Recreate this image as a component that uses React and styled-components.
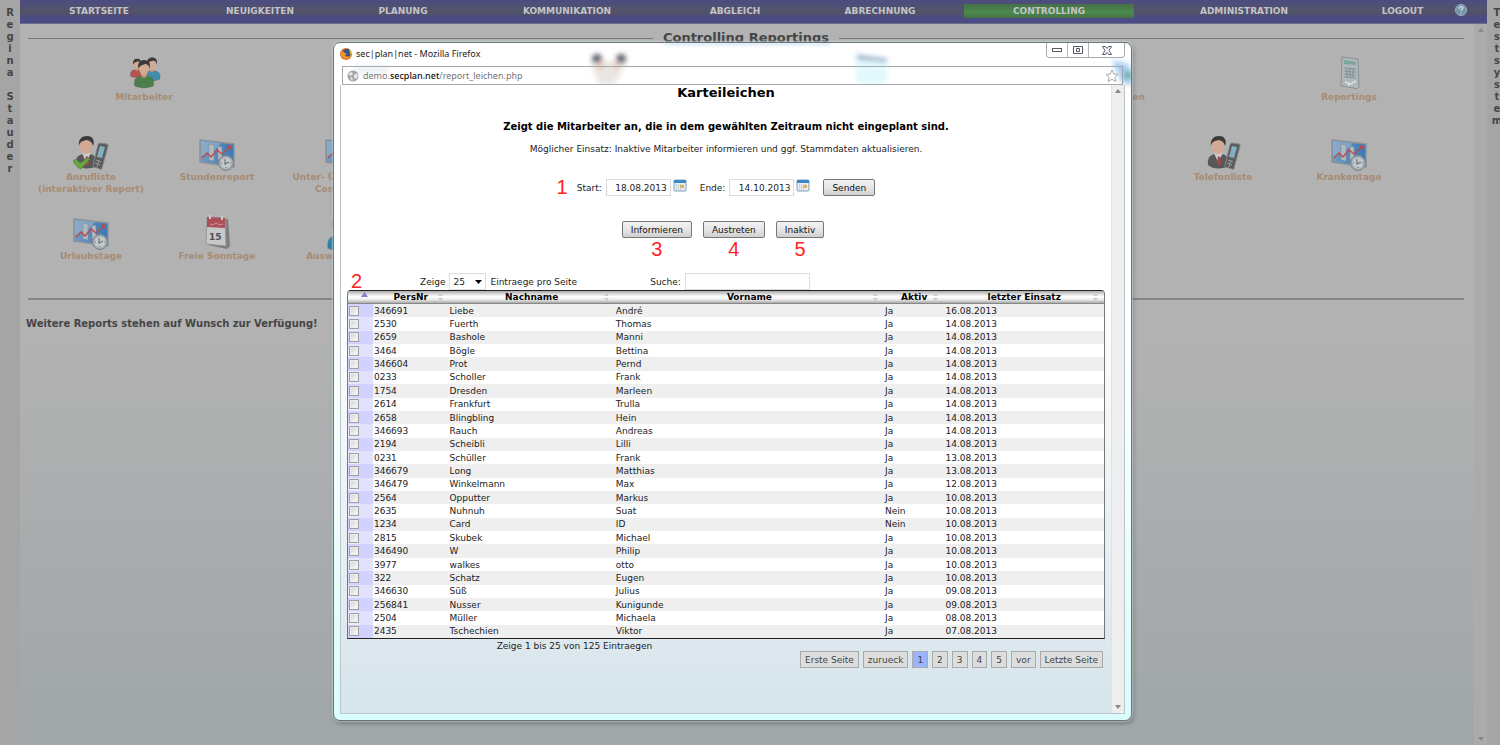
import React from "react";
import styled, { createGlobalStyle } from "styled-components";

const GlobalStyle = createGlobalStyle`
  * {
    box-sizing: border-box;
  }

  body {
    margin: 0;
    font-family: Verdana, "DejaVu Sans", sans-serif;
    font-size: 9px;
    color: #222;
  }

  button,
  input,
  select {
    font-family: inherit;
    font-size: inherit;
    color: inherit;
  }
`;

const Page = styled.div`
  position: relative;
  display: grid;
  grid-template-columns: 20px 1fr 13px;
  min-height: 100vh;
  overflow: hidden;
  background: linear-gradient(#b2b2b2 45%, #a0a6a9);
`;

const Rail = styled.aside`
  display: flex;
  flex-direction: column;
  align-items: center;
  min-width: 20px;
  padding-top: 7px;
  background: #a5a5a5;
  font-size: 10px;
  font-weight: bold;
  line-height: 12px;
  color: #454545;
  white-space: pre;
`;

const Center = styled.div`
  display: flex;
  flex-direction: column;
`;

const Nav = styled.nav`
  display: grid;
  grid-template-columns: 158fr 164fr 122fr 206fr 130fr 160fr 178fr 212fr 105fr 32fr;
  height: 24px;
  padding-top: 4px;
  background: linear-gradient(#4c4c82, #53536a 45%, #515168 55%, #4b4b86 80%);
  border-bottom: 1px solid #6c6c88;
`;

const NavLink = styled.a`
  height: 14px;
  margin: 0 4px;
  background: ${({ $active }) =>
    $active ? "linear-gradient(#477048, #4a8a4c 60%, #477048)" : "none"};
  color: #c4c4c8;
  font-size: 9px;
  font-weight: bold;
  line-height: 14px;
  text-align: center;
  text-decoration: none;
`;

const HelpButton = styled.button`
  width: 12px;
  height: 12px;
  padding: 0;
  border: 0;
  background: none;
`;

const Body = styled.div`
  display: flex;
  flex: 1;
`;

const Main = styled.main`
  flex: 1;
  padding: 6px 10px 0 8px;
`;

const Reports = styled.fieldset`
  height: 270px;
  margin: 0;
  padding: 9px 0 0;
  border: 0;
  border-top: 1px solid #777;
  border-bottom: 2px solid #858585;
`;

const Legend = styled.legend`
  margin: 0 auto;
  padding: 0 10px;
  color: #454545;
  font-size: 13px;
  font-weight: bold;
  line-height: 16px;
`;

const CategoryRow = styled.div`
  display: grid;
  grid-template-columns: repeat(5, 1fr) 126px;
  justify-items: start;
  height: 80px;
  margin-right: 52px;
  padding-left: 53px;
`;

const ReportRow = styled.div`
  display: grid;
  grid-template-columns: repeat(11, 1fr);
  height: 79px;
  margin-right: 52px;
`;

const Tile = styled.a`
  display: flex;
  flex-direction: column;
  align-items: center;
  min-width: 126px;
  grid-column: ${({ $col }) => $col || "auto"};
  color: #a68c72;
  font-size: 9px;
  font-weight: bold;
  line-height: 12px;
  text-align: center;
  text-decoration: none;
  white-space: pre-line;

  svg {
    width: 36px;
    height: 36px;
  }
`;

const Note = styled.p`
  margin: 18px 0 0;
  text-indent: -2px;
  color: #454545;
  font-size: 10px;
  font-weight: bold;
  line-height: 12px;
`;

const Scroll = styled.div`
  display: flex;
  flex: 0 0 13px;
  flex-direction: column;
  justify-content: space-between;
  align-items: center;
  padding: 4px 0;
  background: ${({ $light }) => ($light ? "#eee" : "#ababab")};
  border-left: 1px solid ${({ $light }) => ($light ? "#e2e2e2" : "#adadad")};
`;

const Window = styled.section`
  position: absolute;
  top: 42px;
  left: 333px;
  right: 368px;
  padding: 0 6px 6px;
  background: linear-gradient(#fff 30%, #f4ffff 60%, #d9fdfd);
  border: 1px solid #6f7577;
  border-radius: 7px;
  box-shadow: 0 0 2px 1px rgba(220, 235, 240, 0.6), 1px 2px 4px rgba(0, 0, 0, 0.4);
`;

const TitleBar = styled.header`
  display: flex;
  align-items: flex-start;
  gap: 4px;
  height: 23px;
  color: #222;
  font-family: "Noto Sans", sans-serif;
  font-size: 9px;
  line-height: 22px;
`;

const BrowserIcon = styled.svg`
  width: 12px;
  height: 12px;
  margin-top: 5px;
`;

const WindowTitle = styled.span`
  flex: 1;
`;

const WindowButtons = styled.div`
  display: flex;
  border: 1px solid #a8a8a8;
  border-top: 0;
  border-radius: 0 0 4px 4px;
  overflow: hidden;
`;

const WindowButton = styled.button`
  display: flex;
  justify-content: center;
  align-items: center;
  width: ${({ $wide }) => ($wide ? "35px" : "21px")};
  height: 14px;
  padding: 0;
  border: 0;
  border-right: ${({ $wide }) => ($wide ? "0" : "1px solid #b4b4b4")};
  background: #fff;
`;

const Glass = styled.svg`
  position: absolute;
  top: 0;
  left: 0;
  width: 100%;
  height: 70px;
  pointer-events: none;
`;

const AddressBar = styled.div`
  position: relative;
  display: flex;
  align-items: center;
  gap: 4px;
  height: 19px;
  margin: 0 2px;
  padding: 0 3px 0 4px;
  border: 1px solid #a2a8ac;
  color: #777;
  font-family: "Noto Sans", sans-serif;
  font-size: 9px;

  b {
    color: #111;
    font-weight: 500;
  }
`;

const Url = styled.span`
  flex: 1;
`;

const Viewport = styled.div`
  position: relative;
  display: flex;
  border: 1px solid #bcc4c8;
  border-top: 0;
  background: linear-gradient(#fff 35%, #d6e4eb);
`;

const Report = styled.div`
  flex: 1;
  min-height: 628px;
  padding: 0 6px;
  color: #222;
`;

const Title = styled.h1`
  margin: 0;
  color: #000;
  font-size: 13px;
  line-height: 16px;
  text-align: center;
`;

const Subtitle = styled.h2`
  margin: 18px 0 0;
  color: #000;
  font-size: 10px;
  line-height: 16px;
  text-align: center;
`;

const Hint = styled.p`
  margin: 6px 0 0;
  line-height: 16px;
  text-align: center;
`;

const RangeForm = styled.form`
  display: flex;
  justify-content: center;
  align-items: center;
  gap: 13px;
  margin-top: 22px;
`;

const Field = styled.label`
  position: relative;
  display: flex;
  align-items: center;
  gap: 4px;
`;

const DateBox = styled.span`
  display: flex;
  gap: 2px;
`;

const TextInput = styled.input`
  width: ${({ $wide }) => ($wide ? "125px" : "65px")};
  height: 17px;
  padding: 0 3px;
  border: 1px solid #ddd;
  background: #fff;
  text-align: ${({ $wide }) => ($wide ? "left" : "right")};
`;

const ActionBar = styled.div`
  display: flex;
  justify-content: center;
  gap: 11px;
  margin: 25px 0 35px;
  padding-right: 6px;
`;

const Action = styled.div`
  position: relative;
`;

const PushButton = styled.button`
  height: 17px;
  padding: 0 8px;
  border: 1px solid #777;
  border-radius: 2px;
  background: linear-gradient(#f2f2f2, #e6e6e6 50%, #cfcfcf);
  color: #111;
  line-height: 14px;
`;

const Marker = styled.span`
  position: absolute;
  ${({ $below }) =>
    $below
      ? "top: 17px; left: 0; right: 0; text-align: center;"
      : "top: -3px; right: 100%; margin-right: 9px;"}
  color: #f22;
  font-family: "Liberation Sans", Arial, sans-serif;
  font-size: 20px;
  line-height: 22px;
`;

const Tools = styled.div`
  position: relative;
  display: grid;
  grid-template-columns: 40% 60%;
  align-items: center;

  > ${Marker} {
    right: auto;
    left: 4px;
  }
`;

const Length = styled.label`
  display: flex;
  justify-content: center;
  align-items: center;
  gap: 4px;
`;

const Select = styled.select`
  width: 37px;
  height: 17px;
  padding: 0 3px;
  border: 1px solid #ddd;
  background: #fff
    url("data:image/svg+xml,%3Csvg xmlns='http://www.w3.org/2000/svg' width='7' height='4'%3E%3Cpath d='M0 0h7L3.500 4z'/%3E%3C/svg%3E")
    no-repeat right 3px center;
  appearance: none;
`;

const Table = styled.table`
  width: 100%;
  height: 349px;
  table-layout: fixed;
  border: 1px solid #222;
  border-right-color: #777;
  border-left-color: #777;
  border-radius: 4px 4px 0 0;
  border-collapse: separate;
  border-spacing: 0;
  overflow: hidden;
`;

const Th = styled.th`
  position: relative;
  height: 13px;
  padding: 0;
  background: linear-gradient(#aaa, #fff 45%, #eee 70%, #aaa);
  border-bottom: 1px solid #888;
  color: #000;
  font-size: 9px;
  line-height: 12px;

  svg {
    position: absolute;
    top: 1px;
    right: 5px;
  }
`;

const Tr = styled.tr`
  background: #fff;

  &:nth-child(odd) {
    background: #efefef;
  }
`;

const Td = styled.td`
  padding: 0 1px;
  line-height: 12px;
`;

const CheckCell = styled(Td)`
  background: linear-gradient(90deg, #e8e8ff 45%, #e2e2ff 45%);
  line-height: 0;

  ${Tr}:nth-child(odd) & {
    background: #d2d2ff;
  }
`;

const Check = styled.input`
  appearance: none;
  width: 10px;
  height: 10px;
  margin: 0;
  border: 1px solid #a0a0a0;
  background: linear-gradient(135deg, #cfcfcf, #fff);
  box-shadow: inset 0 0 0 1px #eee;
`;

const Footer = styled.footer`
  display: grid;
  grid-template-columns: 60% 40%;
`;

const Info = styled.div`
  line-height: 14px;
  text-align: center;
`;

const Pager = styled.div`
  display: flex;
  justify-content: flex-end;
  gap: 4px;
  padding: 12px 2px 0 0;
`;

const PageButton = styled.button`
  height: 17px;
  padding: 0 4px;
  border: 1px solid #aaa;
  background: ${({ $active }) => ($active ? "#99b3ff" : "#ddd")};
  color: #444;
  line-height: 14px;
  white-space: nowrap;
`;

const navItems = [
  "STARTSEITE",
  "NEUIGKEITEN",
  "PLANUNG",
  "KOMMUNIKATION",
  "ABGLEICH",
  "ABRECHNUNG",
  "CONTROLLING",
  "ADMINISTRATION",
  "LOGOUT",
];

const columns = [
  { name: "", width: "3.3%" },
  { name: "PersNr", width: "10%" },
  { name: "Nachname", width: "22%" },
  { name: "Vorname", width: "35.6%" },
  { name: "Aktiv", width: "8%" },
  { name: "letzter Einsatz", width: "21.1%" },
];

const rows = [
  ["346691", "Liebe", "André", "Ja", "16.08.2013"],
  ["2530", "Fuerth", "Thomas", "Ja", "14.08.2013"],
  ["2659", "Bashole", "Manni", "Ja", "14.08.2013"],
  ["3464", "Bögle", "Bettina", "Ja", "14.08.2013"],
  ["346604", "Prot", "Pernd", "Ja", "14.08.2013"],
  ["0233", "Scholler", "Frank", "Ja", "14.08.2013"],
  ["1754", "Dresden", "Marleen", "Ja", "14.08.2013"],
  ["2614", "Frankfurt", "Trulla", "Ja", "14.08.2013"],
  ["2658", "Blingbling", "Hein", "Ja", "14.08.2013"],
  ["346693", "Rauch", "Andreas", "Ja", "14.08.2013"],
  ["2194", "Scheibli", "Lilli", "Ja", "14.08.2013"],
  ["0231", "Schüller", "Frank", "Ja", "13.08.2013"],
  ["346679", "Long", "Matthias", "Ja", "13.08.2013"],
  ["346479", "Winkelmann", "Max", "Ja", "12.08.2013"],
  ["2564", "Opputter", "Markus", "Ja", "10.08.2013"],
  ["2635", "Nuhnuh", "Suat", "Nein", "10.08.2013"],
  ["1234", "Card", "ID", "Nein", "10.08.2013"],
  ["2815", "Skubek", "Michael", "Ja", "10.08.2013"],
  ["346490", "W", "Philip", "Ja", "10.08.2013"],
  ["3977", "walkes", "otto", "Ja", "10.08.2013"],
  ["322", "Schatz", "Eugen", "Ja", "10.08.2013"],
  ["346630", "Süß", "Julius", "Ja", "09.08.2013"],
  ["256841", "Nusser", "Kunigunde", "Ja", "09.08.2013"],
  ["2504", "Müller", "Michaela", "Ja", "08.08.2013"],
  ["2435", "Tschechien", "Viktor", "Ja", "07.08.2013"],
];

const pages = ["Erste Seite", "zurueck", "1", "2", "3", "4", "5", "vor", "Letzte Seite"];

const Person = ({ x, y, shirt, scale = 1 }) => (
  <g transform={`translate(${x} ${y}) scale(${scale})`}>
    <path d="M-10 25c-1-7 2-10 7-10h6c5 0 8 3 7 10-5 3-15 3-20 0z" fill={shirt} stroke="#555" strokeOpacity=".3" />
    <path d="M-3 12h6v3l-3 2-3-2z" fill="#c4947d" />
    <ellipse cx="0" cy="7" rx="5" ry="7" fill="#d2a993" />
    <path d="M-6 7c-1-6 2-9 6-9 5 0 7 3 6 9-1-4-2-4-4-5-3 1-6 1-8 5z" fill="#3a3a3a" />
  </g>
);

const PeopleIcon = () => (
  <svg viewBox="0 0 36 36">
    <Person x={11} y={5} shirt="#b4544f" scale={0.65} />
    <Person x={26} y={4} shirt="#3f8dab" scale={0.8} />
    <Person x={18} y={7} shirt="#4c7d4a" scale={0.95} />
  </svg>
);

const PhoneIcon = ({ checked }) => (
  <svg viewBox="0 0 36 36">
    <path d="M3 30c-1-7 2-10 7-11h7c5 1 8 5 7 12-5 3-16 4-21-1z" fill="#58585b" />
    <path d="M9 18l4 9 5-9z" fill="#ccc" />
    <path d="M13 21l2 1 1 6-2 3-2-3z" fill="#a44" />
    <ellipse cx="13" cy="11" rx="6" ry="8" fill="#d2a993" />
    <path d="M6 11C5 4 9 1 14 1c6 0 8 5 6 10-1-4-3-5-6-6-4 1-7 1-8 6z" fill="#3a3a3a" />
    <path d="M27 8l7 1c1 0 1 1 1 2l-6 22c0 1-1 2-2 1l-6-2c-1 0-1-1-1-2l5-20c0-1 1-2 2-2z" fill="#5a5c5e" stroke="#858585" />
    <path d="M27 11l5 1-3 11-5-1z" fill="#82b0bf" />
    <path d="M23 25l5 2M22 28l5 2M26 25l-2 7" stroke="#999" />
    {checked && (
      <path d="M0 26l3-2 4 4 8-5 2 1-9 10c-3-1-5-3-8-8z" fill="#6ba645" stroke="#508537" strokeWidth=".7" />
    )}
  </svg>
);

const ChartIcon = () => (
  <svg viewBox="0 0 36 36">
    <defs>
      <linearGradient id="screen" x1="0" x2="1">
        <stop offset="0" stopColor="#6f9cc2" />
        <stop offset="1" stopColor="#3a78b4" />
      </linearGradient>
    </defs>
    <path d="M1 5l34 4v23L1 27z" fill="url(#screen)" stroke="#8c9297" strokeWidth="1.500" />
    <path d="M2 6l20 2-8 9-12 4z" fill="#9bb6cc" opacity=".6" />
    <path d="M10 9l5 1v16l-5-1zM19 11l4 1v14l-4-1z" fill="#b3b9be" stroke="#80868c" strokeWidth=".5" />
    <path d="M3 23l5-5 4 4 6-7 5 4 8-7" fill="none" stroke="#c24747" strokeWidth="1.300" />
    <path d="M28 10l5 1-2 4z" fill="#c24747" />
    <circle cx="27" cy="28" r="7.500" fill="#a0abb1" stroke="#7b858a" />
    <circle cx="27" cy="28" r="5.500" fill="#c2c8cb" />
    <path d="M26 24v5l4-2M22 28h1M27 32v1M31 28h1" stroke="#6b757a" strokeWidth="1.200" fill="none" />
  </svg>
);

const CalendarIcon = () => (
  <svg viewBox="0 0 36 36">
    <path d="M11 3l18 2 2 27-3 3L9 31z" fill="#7d7d7d" />
    <path d="M8 3l18 1 1 28-20-2z" fill="#c8c8c8" stroke="#989898" />
    <path d="M8 3l18 1v10L8 13z" fill="#ad4f56" />
    <path d="M11 1v4M23 2v4" stroke="#ccc" strokeWidth="2" />
    <path d="M11 10l3 1 3-2 4 2 3-1" stroke="#cc9297" fill="none" />
    <text x="10" y="26" fontSize="9" fontWeight="bold" fontFamily="DejaVu Sans" fill="#505050">15</text>
  </svg>
);

const DocumentIcon = () => (
  <svg viewBox="0 0 36 36">
    <path d="M11 2l16 2 1 28c-1 2-4 2-5 1L10 31z" fill="#aeb8ba" stroke="#869194" />
    <path d="M13 5l12 2v3l-12-1z" fill="#7ba79b" />
    <path d="M13 13l12 1M13 16l12 1M13 19l12 1M13 22l12 1M16 14v8M19 14v8M22 14v8" stroke="#82909a" strokeWidth="1.200" />
    <path d="M14 27l6 2 5-3M19 28l-2 3" stroke="#dde2e3" fill="none" strokeWidth="1.500" />
  </svg>
);

const UserIcon = () => (
  <svg viewBox="0 0 36 36">
    <Person x={15} y={4} shirt="#2b83a8" scale={1.2} />
  </svg>
);

const DateIcon = () => (
  <svg width="14" height="14" viewBox="0 0 14 14">
    <rect x="1" y="1" width="12" height="11" rx="1" fill="#e9eef2" stroke="#7d9fbe" />
    <path d="M1 1h12v3H1z" fill="#3d88c8" />
    <path d="M3 6h7M3 8h7M3 10h5" stroke="#aab5c4" strokeDasharray="1 1" />
    <path d="M7 6h4v3H7z" fill="#dcb45a" />
  </svg>
);

const Arrow = ({ down }) => (
  <svg width="6" height="4" viewBox="0 0 6 4">
    <path d={down ? "M0 0h6L3 4z" : "M0 4h6L3 0z"} fill="#888" />
  </svg>
);

const SortIcon = ({ active }) => (
  <svg width="7" height="10" viewBox="0 0 7 10">
    {active ? (
      <path d="M0 5h7L3.500 0z" fill="#7d7ddd" />
    ) : (
      <path d="M1 4h5L3.500 1zM1 6h5L3.500 9z" fill="#ccc" />
    )}
  </svg>
);

const Glow = () => (
  <Glass aria-hidden="true">
    <defs>
      <filter id="soft" x="-40%" y="-40%" width="180%" height="180%">
        <feGaussianBlur stdDeviation="2.500" />
      </filter>
    </defs>
    <g filter="url(#soft)">
      <path d="M330-2h166v3H330z" fill="#b6d5ee" />
      <path d="M20 22h34v9H20z" fill="#edf3f6" />
      <path d="M258 18h34l-6 14-6 10h-14l-6-12z" fill="#e9e6e2" />
      <circle cx="263" cy="16" r="5" fill="#546170" />
      <circle cx="287" cy="16" r="5" fill="#546170" />
      <path d="M262 19l4 8 4-1-2-8zM282 18l-3 8 4 1 4-8z" fill="#e8c5b5" />
      <path d="M522 14l31 3v24h-31z" fill="#e2f9fd" />
      <path d="M523 12l30 4v3l-30-3z" fill="#829ebd" />
      <path d="M778 17l17 4 3 22-11-4z" fill="#a7cff2" />
      <path d="M791 28h7v8h-7z" fill="#5baaa4" />
    </g>
  </Glass>
);

const DateField = ({ label, value, marker }) => (
  <Field>
    {marker && <Marker>{marker}</Marker>}
    {label}
    <DateBox>
      <TextInput defaultValue={value} />
      <DateIcon />
    </DateBox>
  </Field>
);

const ReportTable = () => (
  <Table>
    <colgroup>
      {columns.map(({ name, width }) => (
        <col key={name} style={{ width }} />
      ))}
    </colgroup>
    <thead>
      <tr>
        {columns.map(({ name }) => (
          <Th key={name}>
            {name}
            <SortIcon active={!name} />
          </Th>
        ))}
      </tr>
    </thead>
    <tbody>
      {rows.map(row => (
        <Tr key={row[0]}>
          <CheckCell>
            <Check type="checkbox" aria-label={row[1]} />
          </CheckCell>
          {row.map((cell, i) => (
            <Td key={i}>{cell}</Td>
          ))}
        </Tr>
      ))}
    </tbody>
  </Table>
);

const BrowserWindow = () => (
  <Window>
    <Glow />
    <TitleBar>
      <BrowserIcon viewBox="0 0 12 12">
        <circle cx="6" cy="6" r="6" fill="#dd6a1d" />
        <circle cx="7" cy="5" r="4" fill="#2c568f" />
        <path d="M1 3c2 0 3 1 4 2l2 1-2 1c1 2 4 2 6 0-1 4-5 5-8 3C1 9 0 6 1 3z" fill="#f0932b" />
        <path d="M9 1c3 2 3 5 2 7l-1-3z" fill="#f6c443" />
      </BrowserIcon>
      <WindowTitle>sec|plan|net - Mozilla Firefox</WindowTitle>
      <WindowButtons>
        <WindowButton aria-label="Minimieren">
          <svg width="10" height="5">
            <rect x=".5" y=".5" width="9" height="3" fill="#fff" stroke="#555a68" />
          </svg>
        </WindowButton>
        <WindowButton aria-label="Maximieren">
          <svg width="10" height="9">
            <path d="M.5.500h9v7h-9zM3.500 2.500h3v3h-3z" fill="#fff" stroke="#555a68" />
          </svg>
        </WindowButton>
        <WindowButton $wide aria-label="Schließen">
          <svg width="10" height="9" viewBox="0 0 10 9">
            <path d="M.5.500h3L5 2.500 6.500.500h3L7 4.500l2.500 4h-3L5 6.500l-1.500 2h-3L3 4.500z" fill="#fff" stroke="#555a68" />
          </svg>
        </WindowButton>
      </WindowButtons>
    </TitleBar>
    <AddressBar>
      <svg width="12" height="12" viewBox="0 0 12 12">
        <circle cx="6" cy="6" r="5.500" fill="#a3a3a3" />
        <path d="M2 3l3-1 1 2-2 2-2-1zM7 5l3-2 1 3-2 3-2-1zM3 8l2-1 1 3-1 1z" fill="#e6e6e6" />
      </svg>
      <Url>
        demo.<b>secplan.net</b>/report_leichen.php
      </Url>
      <svg width="14" height="14" viewBox="0 0 14 14">
        <path d="M7 1l1.800 4 4.200.400-3.200 2.900 1 4.200L7 10.300l-3.800 2.200 1-4.200L1 5.400 5.200 5z" fill="#fff" stroke="#aaa" />
      </svg>
    </AddressBar>
    <Viewport>
      <Report>
        <Title>Karteileichen</Title>
        <Subtitle>Zeigt die Mitarbeiter an, die in dem gewählten Zeitraum nicht eingeplant sind.</Subtitle>
        <Hint>Möglicher Einsatz: Inaktive Mitarbeiter informieren und ggf. Stammdaten aktualisieren.</Hint>
        <RangeForm>
          <DateField label="Start:" value="18.08.2013" marker="1" />
          <DateField label="Ende:" value="14.10.2013" />
          <PushButton type="button">Senden</PushButton>
        </RangeForm>
        <ActionBar>
          <Action>
            <PushButton>Informieren</PushButton>
            <Marker $below>3</Marker>
          </Action>
          <Action>
            <PushButton>Austreten</PushButton>
            <Marker $below>4</Marker>
          </Action>
          <Action>
            <PushButton>Inaktiv</PushButton>
            <Marker $below>5</Marker>
          </Action>
        </ActionBar>
        <Tools>
          <Marker>2</Marker>
          <Length>
            Zeige
            <Select defaultValue="25">
              <option>25</option>
            </Select>
            Eintraege pro Seite
          </Length>
          <Field>
            Suche:
            <TextInput $wide type="text" />
          </Field>
        </Tools>
        <ReportTable />
        <Footer>
          <Info>Zeige 1 bis 25 von 125 Eintraegen</Info>
          <Pager>
            {pages.map(page => (
              <PageButton key={page} $active={page === "1"}>
                {page}
              </PageButton>
            ))}
          </Pager>
        </Footer>
      </Report>
      <Scroll $light>
        <Arrow />
        <Arrow down />
      </Scroll>
    </Viewport>
  </Window>
);

const App = () => (
  <>
    <GlobalStyle />
    <Page>
      <Rail>
        {"Regina Stauder".split("").map((letter, i) => (
          <span key={i}>{letter}</span>
        ))}
      </Rail>
      <Center>
        <Nav>
          {navItems.map(item => (
            <NavLink key={item} href="#" $active={item === "CONTROLLING"}>
              {item}
            </NavLink>
          ))}
          <HelpButton aria-label="Hilfe">
            <svg width="12" height="12" viewBox="0 0 12 12">
              <circle cx="6" cy="6" r="5.500" fill="#6f93a8" stroke="#9fb3bf" />
              <path d="M4 5c0-3 4-3 4-1 0 1-2 1-2 3M6 8.500v1" fill="none" stroke="#d5dde2" strokeWidth="1.300" />
            </svg>
          </HelpButton>
        </Nav>
        <Body>
          <Main>
            <Reports>
              <Legend>Controlling Reportings</Legend>
              <CategoryRow>
                <Tile href="#">
                  <PeopleIcon />
                  Mitarbeiter
                </Tile>
                <Tile href="#" $col={5}>
                  <DocumentIcon />
                  Abrechnungen
                </Tile>
                <Tile href="#">
                  <DocumentIcon />
                  Reportings
                </Tile>
              </CategoryRow>
              <ReportRow>
                <Tile href="#">
                  <PhoneIcon checked />
                  {"Anrufliste\n(interaktiver Report)"}
                </Tile>
                <Tile href="#">
                  <ChartIcon />
                  Stundenreport
                </Tile>
                <Tile href="#">
                  <ChartIcon />
                  {"Unter- Überstunden\nControlling"}
                </Tile>
                <Tile href="#" $col={10}>
                  <PhoneIcon />
                  Telefonliste
                </Tile>
                <Tile href="#">
                  <ChartIcon />
                  Krankentage
                </Tile>
              </ReportRow>
              <ReportRow>
                <Tile href="#">
                  <ChartIcon />
                  Urlaubstage
                </Tile>
                <Tile href="#">
                  <CalendarIcon />
                  Freie Sonntage
                </Tile>
                <Tile href="#">
                  <UserIcon />
                  Auswertungen
                </Tile>
              </ReportRow>
            </Reports>
            <Note>Weitere Reports stehen auf Wunsch zur Verfügung!</Note>
          </Main>
          <Scroll>
            <Arrow />
            <Arrow down />
          </Scroll>
        </Body>
      </Center>
      <Rail>
        {"Testsystem".split("").map((letter, i) => (
          <span key={i}>{letter}</span>
        ))}
      </Rail>
      <BrowserWindow />
    </Page>
  </>
);

export default App;
